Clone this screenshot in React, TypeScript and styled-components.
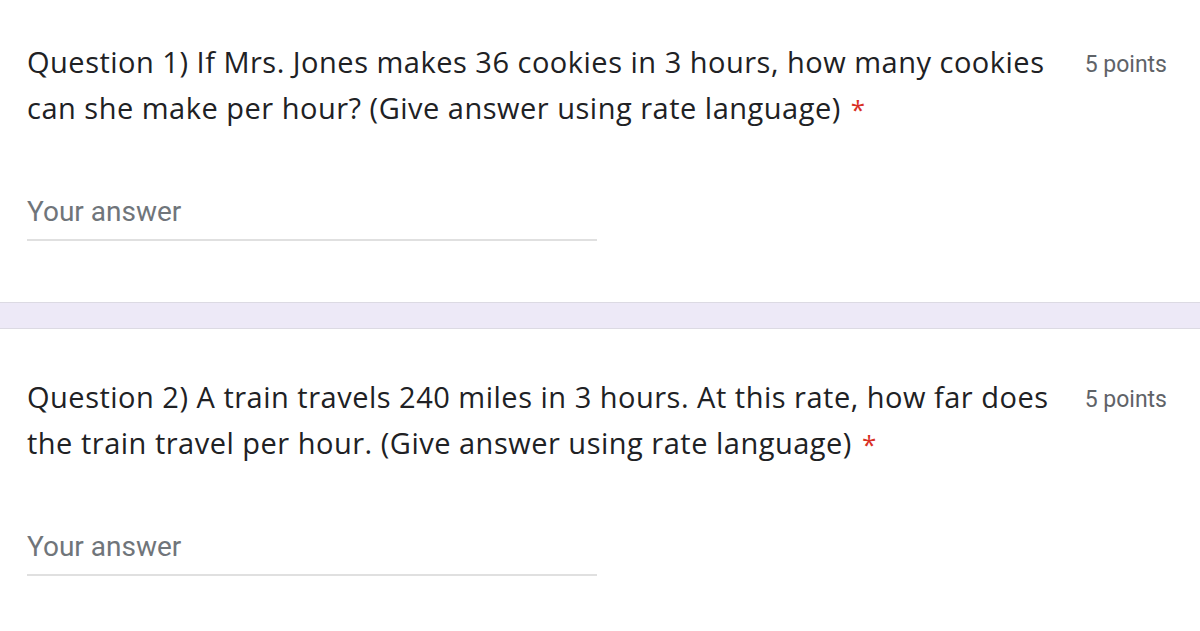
import React from 'react'
import styled, { createGlobalStyle } from 'styled-components'

const GlobalStyle = createGlobalStyle`
  html, body { margin: 0; padding: 0; background: #fff; }
  body { font-family: Roboto, "Liberation Sans", sans-serif; overflow: hidden; }
`

// css
const Page = styled.div`display: flex; flex-direction: column; width: 1200px;`
const Card = styled.section<{ $top: number }>`
  padding: ${(p) => p.$top}px 33px 61px 27px;
  background: #fff;
`
const Header = styled.div`display: flex; align-items: flex-start; gap: 24px;`
const Title = styled.div`
  flex: 1;
  font-family: "Open Sans", Roboto, sans-serif;
  font-size: 29px;
  line-height: 46px;
  color: #202124;
  letter-spacing: 0.5px;
`
const Required = styled.span`color: #d93025; margin-left: 10px; font-size: 26px;`
const Points = styled.div`
  font-family: Roboto, sans-serif;
  font-size: 23px;
  line-height: 46px;
  color: #5f6368;
  padding-top: 3px;
  white-space: nowrap;
`
const Answer = styled.div`
  width: 570px;
  margin-top: 63px;
  padding-bottom: 10px;
  border-bottom: 2px solid #e0e0e0;
  font-family: Roboto, sans-serif;
  font-size: 28px;
  line-height: 34px;
  color: #70757a;
`
const Divider = styled.div`
  height: 25px;
  background: #ede9f7;
  border-top: 1px solid #dcdae3;
  border-bottom: 1px solid #dcdae3;
`

const questions = [
  {
    id: 1,
    text: 'Question 1) If Mrs. Jones makes 36 cookies in 3 hours, how many cookies can she make per hour? (Give answer using rate language)',
  },
  {
    id: 2,
    text: 'Question 2) A train travels 240 miles in 3 hours. At this rate, how far does the train travel per hour. (Give answer using rate language)',
  },
]

const App: React.FC = () => (
  <>
    <GlobalStyle />
    <Page>
      {questions.map((q, i) => (
        <React.Fragment key={q.id}>
          {i > 0 && <Divider />}
          <Card $top={i === 0 ? 39 : 45}>
            <Header>
              <Title>
                <span>{q.text}</span>
                <Required>*</Required>
              </Title>
              <Points>5 points</Points>
            </Header>
            <Answer>Your answer</Answer>
          </Card>
        </React.Fragment>
      ))}
    </Page>
  </>
)

export default App
